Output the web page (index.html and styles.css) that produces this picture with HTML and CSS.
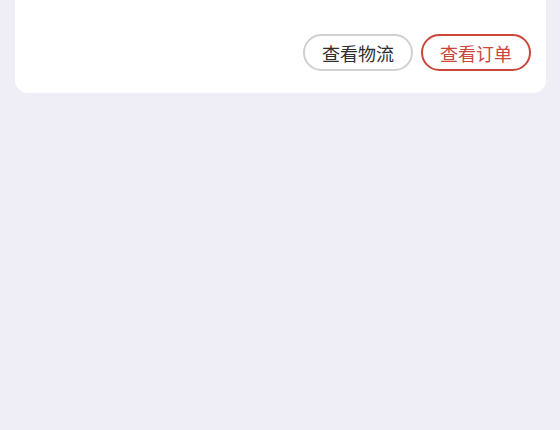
FILE: index.html
```html
<!DOCTYPE html>
<html lang="zh-CN">
<head>
<meta charset="utf-8">
<link rel="stylesheet" href="styles.css">
</head>
<body>
<div class="page">
  <div class="card">
    <div class="price-row"><span class="price">¥ 000.00</span></div>
    <div class="actions">
      <button class="btn btn-plain">查看物流</button>
      <button class="btn btn-primary">查看订单</button>
    </div>
  </div>
</div>
</body>
</html>
```
FILE: styles.css
```css
html, body {
  margin: 0;
  padding: 0;
  background: #efeef6;
  font-family: "Noto Sans CJK SC", "Noto Sans", sans-serif;
}
.page {
  width: 560px;
  height: 430px;
  overflow: hidden;
}
.card {
  margin: -22px 14px 0 15px;
  padding: 0 15px 22px;
  background: #ffffff;
  border-radius: 0 0 13px 13px;
}
.price-row {
  display: flex;
  justify-content: flex-end;
  height: 28px;
  line-height: 28px;
}
.price {
  font-size: 20px;
  color: #f3d2c2;
  letter-spacing: 1px;
}
.actions {
  display: flex;
  justify-content: flex-end;
  gap: 8px;
  margin-top: 28px;
}
.btn {
  box-sizing: border-box;
  width: 110px;
  height: 37px;
  border-radius: 19px;
  background: #fff;
  font-family: "Noto Sans CJK SC", sans-serif;
  font-size: 18px;
  font-weight: 400;
  padding: 0;
  line-height: 1;
}
.btn-plain {
  border: 2px solid #d0d0d0;
  color: #2e2e2e;
}
.btn-primary {
  border: 2px solid #c9473d;
  color: #c9473d;
}
```
